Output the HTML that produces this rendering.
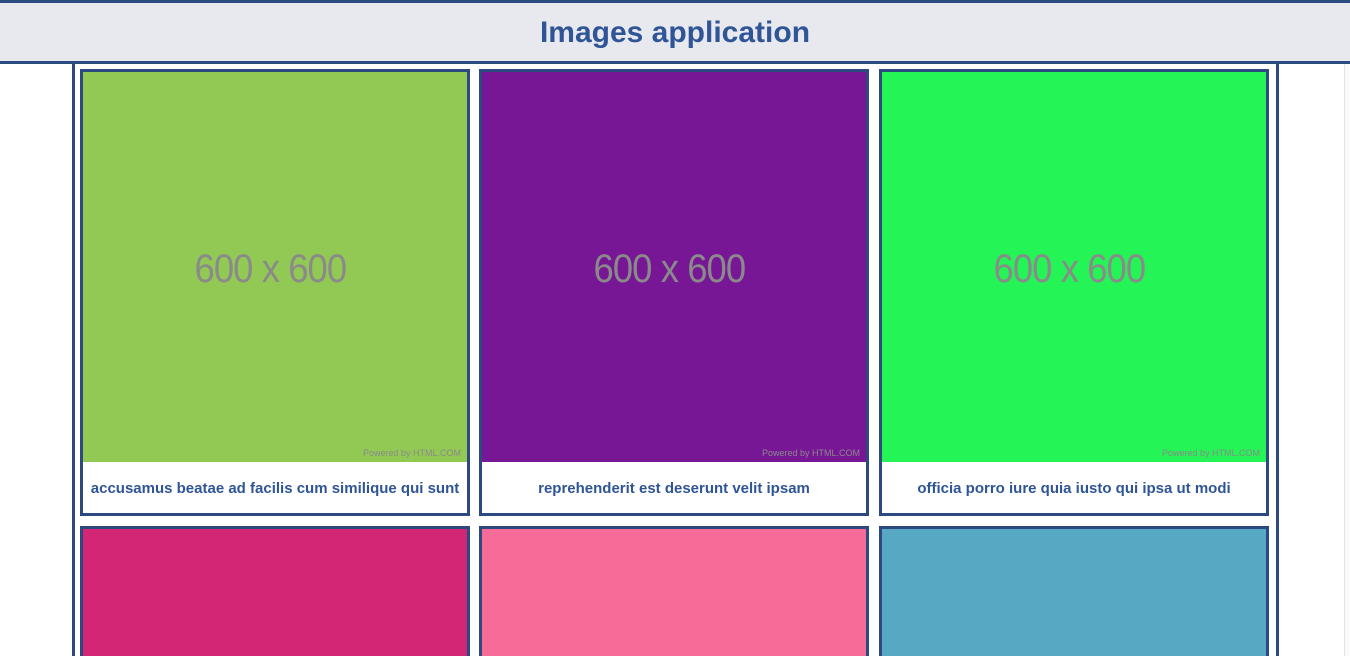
<!DOCTYPE html>
<html style="overflow:hidden;height:656px"><head><style>
*{box-sizing:border-box;margin:0;padding:0}
body{width:1350px;height:656px;overflow:hidden;background:#fff;font-family:"Liberation Sans",sans-serif;position:relative}
.wrap{position:absolute;left:0;top:0;width:1350px;height:656px;overflow:hidden}
.hdr{position:absolute;left:0;top:0;width:1350px;height:64px;background:#e8e9ee;border-top:3px solid #2c4a80;border-bottom:3px solid #2c4a80;text-align:center;color:#2f5597;font-weight:bold;font-size:30px;line-height:60px}
.cont{position:absolute;left:72px;top:64px;width:1207px;height:600px;border-left:3px solid #2c4a80;border-right:3px solid #2c4a80}
.sb{position:absolute;right:0;top:64px;width:6px;height:600px;border-left:1px solid #e4e4e4;background:#fafafa}
.card{position:absolute;width:390px;height:447px;border:3px solid #2c4a80;background:#fff}
.img{height:390px;position:relative;display:flex;align-items:center;justify-content:center;color:#8a8a8a;font-size:40px;letter-spacing:-1px}
.img span{position:relative;top:2px;left:-5px;transform:scaleX(0.91);display:inline-block}
.pw{position:absolute;right:6px;bottom:4px;font-size:9px;color:#8a8a8a;letter-spacing:0}
.cap{text-align:center;color:#2f5597;font-weight:bold;font-size:15px;line-height:51px;padding-top:1px}
</style></head><body><div class="wrap">
<div class="hdr">Images application</div>
<div class="cont"></div>
<div class="sb"></div>
<div class="card" style="left:80px;top:69px"><div class="img" style="background:#92c954"><span>600 x 600</span><div class="pw">Powered by HTML.COM</div></div><div class="cap">accusamus beatae ad facilis cum similique qui sunt</div></div>
<div class="card" style="left:479px;top:69px"><div class="img" style="background:#771796"><span>600 x 600</span><div class="pw">Powered by HTML.COM</div></div><div class="cap">reprehenderit est deserunt velit ipsam</div></div>
<div class="card" style="left:879px;top:69px"><div class="img" style="background:#24f456"><span>600 x 600</span><div class="pw">Powered by HTML.COM</div></div><div class="cap">officia porro iure quia iusto qui ipsa ut modi</div></div>
<div class="card" style="left:80px;top:526px"><div class="img" style="background:#d32776"></div></div>
<div class="card" style="left:479px;top:526px"><div class="img" style="background:#f66b97"></div></div>
<div class="card" style="left:879px;top:526px"><div class="img" style="background:#56a8c3"></div></div>
</div></body></html>
